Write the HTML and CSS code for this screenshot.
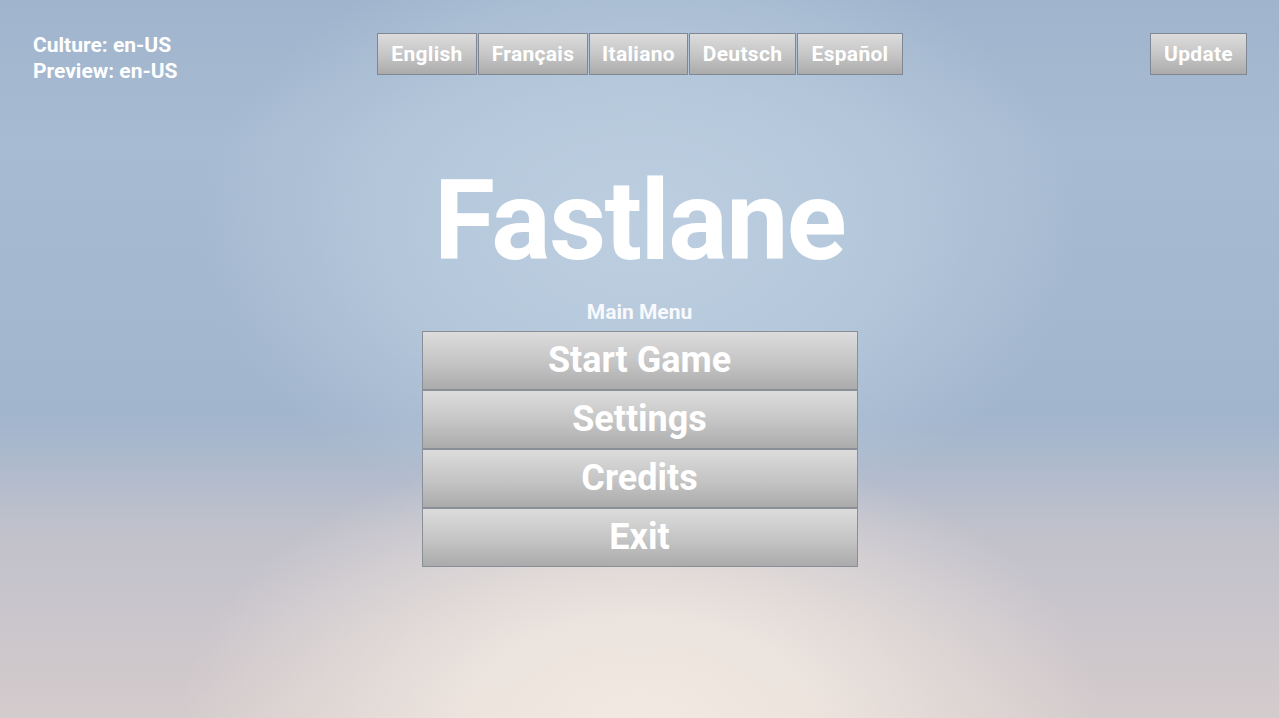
FILE: index.html
```html
<!DOCTYPE html>
<html lang="en">
<head>
<meta charset="utf-8">
<title>Fastlane</title>
<link rel="stylesheet" href="styles.css">
</head>
<body>
<div class="screen">
  <header class="topbar">
    <div class="culture">
      <div>Culture: en-US</div>
      <div>Preview: en-US</div>
    </div>
    <nav class="langs">
      <button class="btn lang w-en">English</button>
      <button class="btn lang w-fr">Français</button>
      <button class="btn lang w-it">Italiano</button>
      <button class="btn lang w-de">Deutsch</button>
      <button class="btn lang w-es">Español</button>
    </nav>
    <div class="right">
      <button class="btn lang update">Update</button>
    </div>
  </header>
  <main class="center">
    <h1 class="title">Fastlane</h1>
    <div class="menu-label">Main Menu</div>
    <div class="menu">
      <button class="btn big">Start Game</button>
      <button class="btn big">Settings</button>
      <button class="btn big">Credits</button>
      <button class="btn big">Exit</button>
    </div>
  </main>
</div>
</body>
</html>
```
FILE: styles.css
```css
* { box-sizing: border-box; }
html, body { margin: 0; padding: 0; }
body {
  width: 1279px;
  height: 718px;
  overflow: hidden;
  font-family: Roboto, "Liberation Sans", sans-serif;
  color: #fff;
}
.screen {
  width: 1279px;
  height: 718px;
  display: flex;
  flex-direction: column;
  background:
    radial-gradient(ellipse 460px 280px at 640px 722px, rgba(242,233,226,1) 0%, rgba(240,231,224,0.88) 38%, rgba(236,226,220,0) 100%),
    radial-gradient(ellipse 440px 300px at 640px 230px, rgba(188,206,224,1) 0%, rgba(186,204,222,0.8) 50%, rgba(180,198,218,0) 100%),
    linear-gradient(to bottom, #a0b5cd 0%, #a7bbd2 20%, #a1b5cd 58%, #c1c1cb 74%, #d4cbcc 100%);
}
.topbar {
  display: flex;
  align-items: flex-start;
  padding: 33px 32px 0 33px;
  height: 75px;
}
.culture {
  width: 344px;
  font-weight: 700;
  font-size: 21px;
  line-height: 26px;
  margin-top: -1px;
}
.langs {
  display: flex;
}
.right {
  flex: 1;
  display: flex;
  justify-content: flex-end;
}
.btn {
  font-family: Roboto, "Liberation Sans", sans-serif;
  font-weight: 700;
  color: #fff;
  background: linear-gradient(to bottom, #dcdcdc 0%, #c4c4c4 55%, #ababab 100%);
  border: 1px solid #7f8794;
  margin: 0;
  padding: 0;
  cursor: pointer;
}
.lang {
  height: 42px;
  font-size: 21px;
  letter-spacing: 0.3px;
  margin-right: 1px;
}
.langs .lang:last-child { margin-right: 0; }
.w-en { width: 100px; }
.w-fr { width: 110px; }
.w-it { width: 99px; }
.w-de { width: 107px; }
.w-es { width: 106px; }
.update { width: 97px; margin-right: 0; }
.center {
  display: flex;
  flex-direction: column;
  align-items: center;
}
.title {
  margin: 76px 0 0 0;
  font-size: 111px;
  font-weight: 700;
  line-height: 140px;
  height: 140px;
  letter-spacing: -1.6px;
}
.menu-label {
  margin-top: 9px;
  font-size: 21px;
  font-weight: 700;
  line-height: 24px;
  color: #f8f9fc;
}
.menu {
  margin-top: 7px;
  display: flex;
  flex-direction: column;
  width: 436px;
}
.big {
  height: 59px;
  font-size: 36px;
  line-height: 57px;
  border-color: #8a8e96;
}
```
